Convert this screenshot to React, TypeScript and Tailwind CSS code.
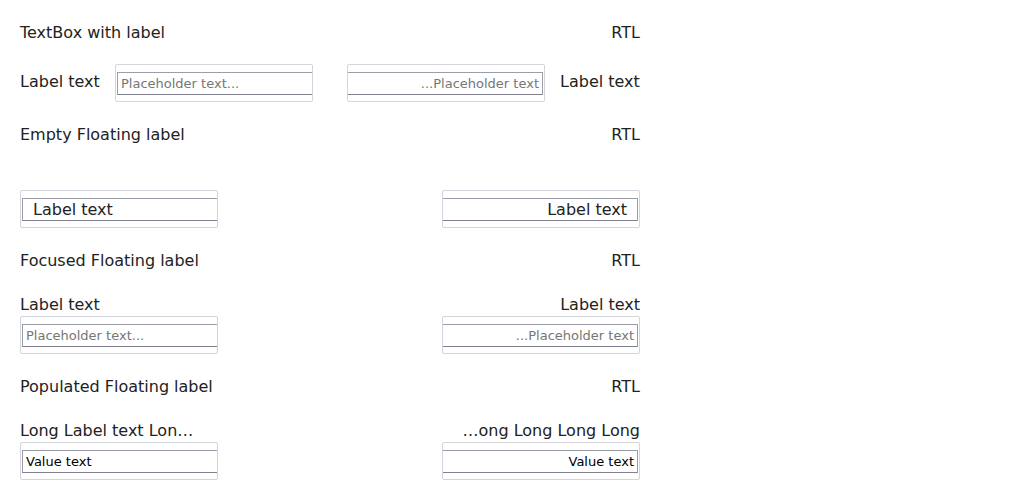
import React from 'react'

const font = { fontFamily: '"DejaVu Sans", sans-serif' }

function Box({ rtl, children }: { rtl?: boolean; children: React.ReactNode }) {
  return (
    <div className="w-[198px] h-[38px] shrink-0 border border-[#d4d4dc] rounded-[2px] pt-[7px] overflow-hidden">
      <div
        dir={rtl ? 'rtl' : 'ltr'}
        className="h-[23px] ms-px border-y border-s border-[#9c9cab] border-b-[#80808f] flex items-center px-[3px]"
      >
        {children}
      </div>
    </div>
  )
}

function Header({ title }: { title: string }) {
  return (
    <div className="col-span-2 flex justify-between h-6 items-center pt-[2px] text-[16px] text-[#222]">
      <span>{title}</span>
      <span>RTL</span>
    </div>
  )
}

const Placeholder = () => <span className="text-[13px] text-[#767676]">Placeholder text...</span>

export default function App() {
  return (
    <div className="bg-white min-h-[500px] p-5" style={font}>
      <div className="w-[620px] grid grid-cols-2 gap-y-5 text-[#222]">
        <Header title="TextBox with label" />

        {/* label beside */}
        <div className="flex items-center gap-[15px]">
          <span className="text-[16px] w-[80px] pb-[2px]">Label text</span>
          <Box>
            <Placeholder />
          </Box>
        </div>
        <div className="flex items-center justify-end gap-[15px]">
          <Box rtl>
            <Placeholder />
          </Box>
          <span className="text-[16px] w-[80px] pb-[2px]">Label text</span>
        </div>

        <Header title="Empty Floating label" />

        <div className="pt-6">
          <Box>
            <span className="text-[16px] ps-[7px]">Label text</span>
          </Box>
        </div>
        <div className="pt-6 flex justify-end">
          <Box rtl>
            <span className="text-[16px] ps-[7px]">Label text</span>
          </Box>
        </div>

        <Header title="Focused Floating label" />

        <div className="w-[198px]">
          <div className="h-6 flex items-center pt-[2px] text-[16px]">Label text</div>
          <Box>
            <Placeholder />
          </Box>
        </div>
        <div className="flex justify-end">
          <div className="w-[198px]">
            <div className="h-6 flex items-center justify-end pt-[2px] text-[16px]">Label text</div>
            <Box rtl>
              <Placeholder />
            </Box>
          </div>
        </div>

        <Header title="Populated Floating label" />

        <div className="w-[198px]">
          <div className="w-[178px] h-6 leading-6 pt-[1px] text-[16px] truncate">
            Long Label text Long Long Long Long
          </div>
          <Box>
            <span className="text-[13px] text-black">Value text</span>
          </Box>
        </div>
        <div className="flex justify-end">
          <div className="w-[198px] flex flex-col items-end">
            <div dir="rtl" className="w-[178px] h-6 leading-6 pt-[1px] text-[16px] truncate">
              Long Label text Long Long Long Long
            </div>
            <Box rtl>
              <span className="text-[13px] text-black">Value text</span>
            </Box>
          </div>
        </div>
      </div>
    </div>
  )
}
